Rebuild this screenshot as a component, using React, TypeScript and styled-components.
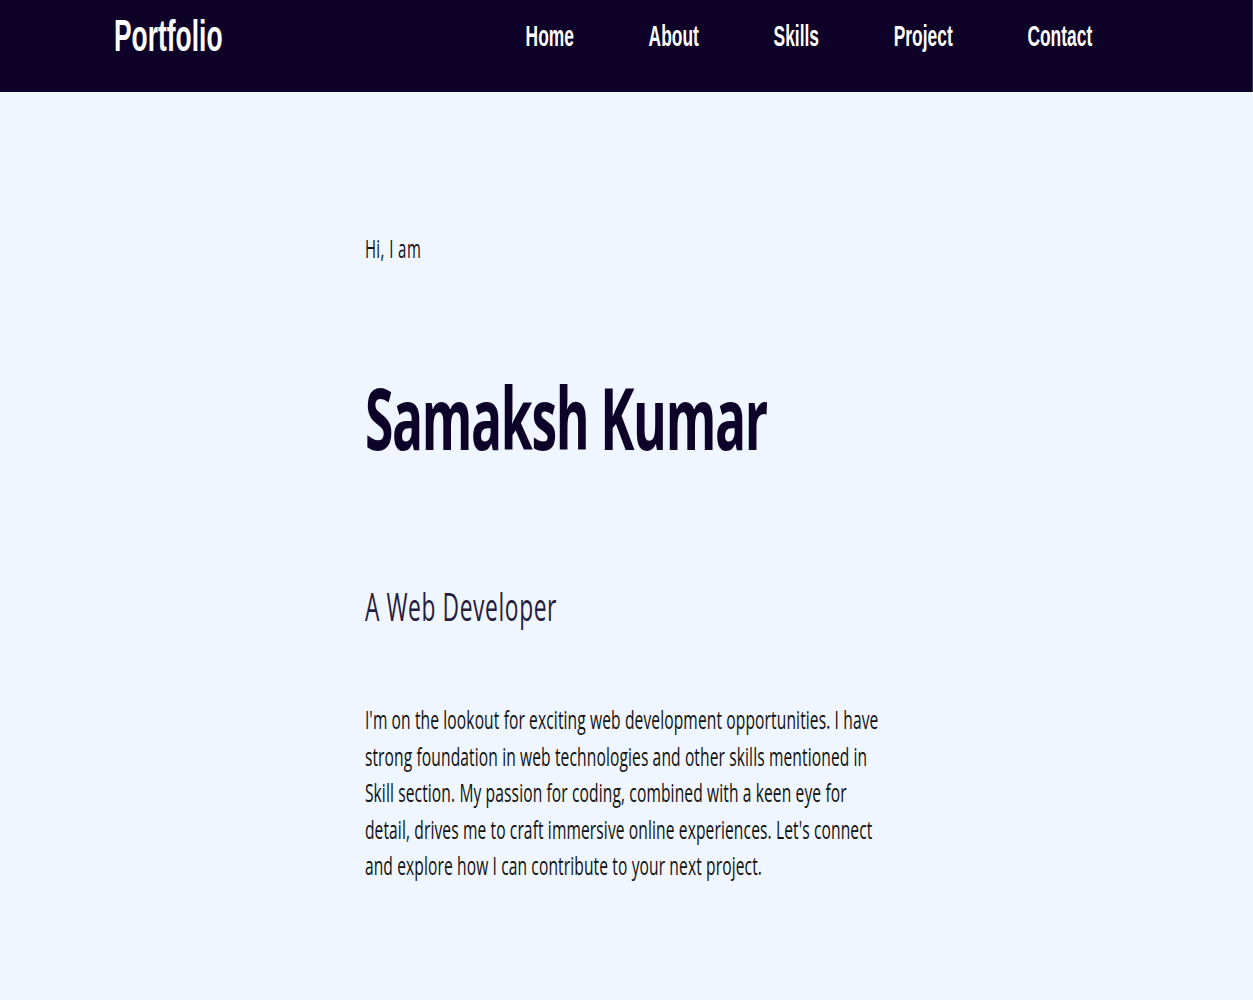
import React from "react";
import styled, { createGlobalStyle } from "styled-components";

const SCALE = 0.6;

const GlobalStyle = createGlobalStyle`
  html, body {
    margin: 0;
    padding: 0;
    background: #eff6ff;
    overflow: hidden;
  }
  * { box-sizing: border-box; }
`;

const Viewport = styled.div`
  width: 100vw;
  min-height: 100vh;
  overflow: hidden;
  background: #eff6ff;
`;

const Stage = styled.div<{ $scale: number }>`
  width: ${(p) => 1253 / p.$scale}px;
  transform: scaleX(${(p) => p.$scale});
  transform-origin: 0 0;
`;

const Header = styled.header`
  height: 92px;
  padding: 0 268px 21px 190px;
  background: #0e0229;
  display: flex;
  align-items: center;
  justify-content: space-between;
`;

const Logo = styled.div`
  font-family: "Liberation Sans", Arial, sans-serif;
  font-weight: 700;
  font-size: 44px;
  color: #ffffff;
`;

const Nav = styled.nav`
  display: flex;
  align-items: center;
  gap: 124.5px;
  padding-top: 2px;
`;

const NavLink = styled.a`
  font-family: "Liberation Sans", Arial, sans-serif;
  font-weight: 700;
  font-size: 29px;
  color: #ffffff;
  text-decoration: none;
`;

const Hero = styled.main`
  width: 872px;
  margin: 0 auto;
  padding-top: 141px;
  display: flex;
  flex-direction: column;
  font-family: "Open Sans", "Noto Sans", sans-serif;
`;

const Greeting = styled.p`
  margin: 0;
  font-size: 25px;
  line-height: 30px;
  letter-spacing: 0.7px;
  color: #111111;
`;

const Name = styled.h1`
  margin: 102px 0 0;
  font-size: 86px;
  line-height: 103px;
  font-weight: 700;
  letter-spacing: -2.3px;
  color: #0d0228;
`;

const Role = styled.h2`
  margin: 116px 0 0;
  font-size: 38px;
  line-height: 44px;
  font-weight: 400;
  letter-spacing: 1px;
  color: #261c3e;
`;

const About = styled.p`
  width: 858px;
  margin: 73px 0 0;
  font-size: 26px;
  line-height: 36.5px;
  letter-spacing: 0.18px;
  color: #111111;
`;

export default function App() {
  return (
    <Viewport>
      <GlobalStyle />
      <Stage $scale={SCALE}>
        <Header>
          <Logo>Portfolio</Logo>
          <Nav>
            <NavLink href="#home">Home</NavLink>
            <NavLink href="#about">About</NavLink>
            <NavLink href="#skills">Skills</NavLink>
            <NavLink href="#project">Project</NavLink>
            <NavLink href="#contact">Contact</NavLink>
          </Nav>
        </Header>
        <Hero>
          <Greeting>Hi, I am</Greeting>
          <Name>Samaksh Kumar</Name>
          <Role>A Web Developer</Role>
          <About>
            I'm on the lookout for exciting web development opportunities. I have
            strong foundation in web technologies and other skills mentioned in
            Skill section. My passion for coding, combined with a keen eye for
            detail, drives me to craft immersive online experiences. Let's connect
            and explore how I can contribute to your next project.
          </About>
        </Hero>
      </Stage>
    </Viewport>
  );
}
